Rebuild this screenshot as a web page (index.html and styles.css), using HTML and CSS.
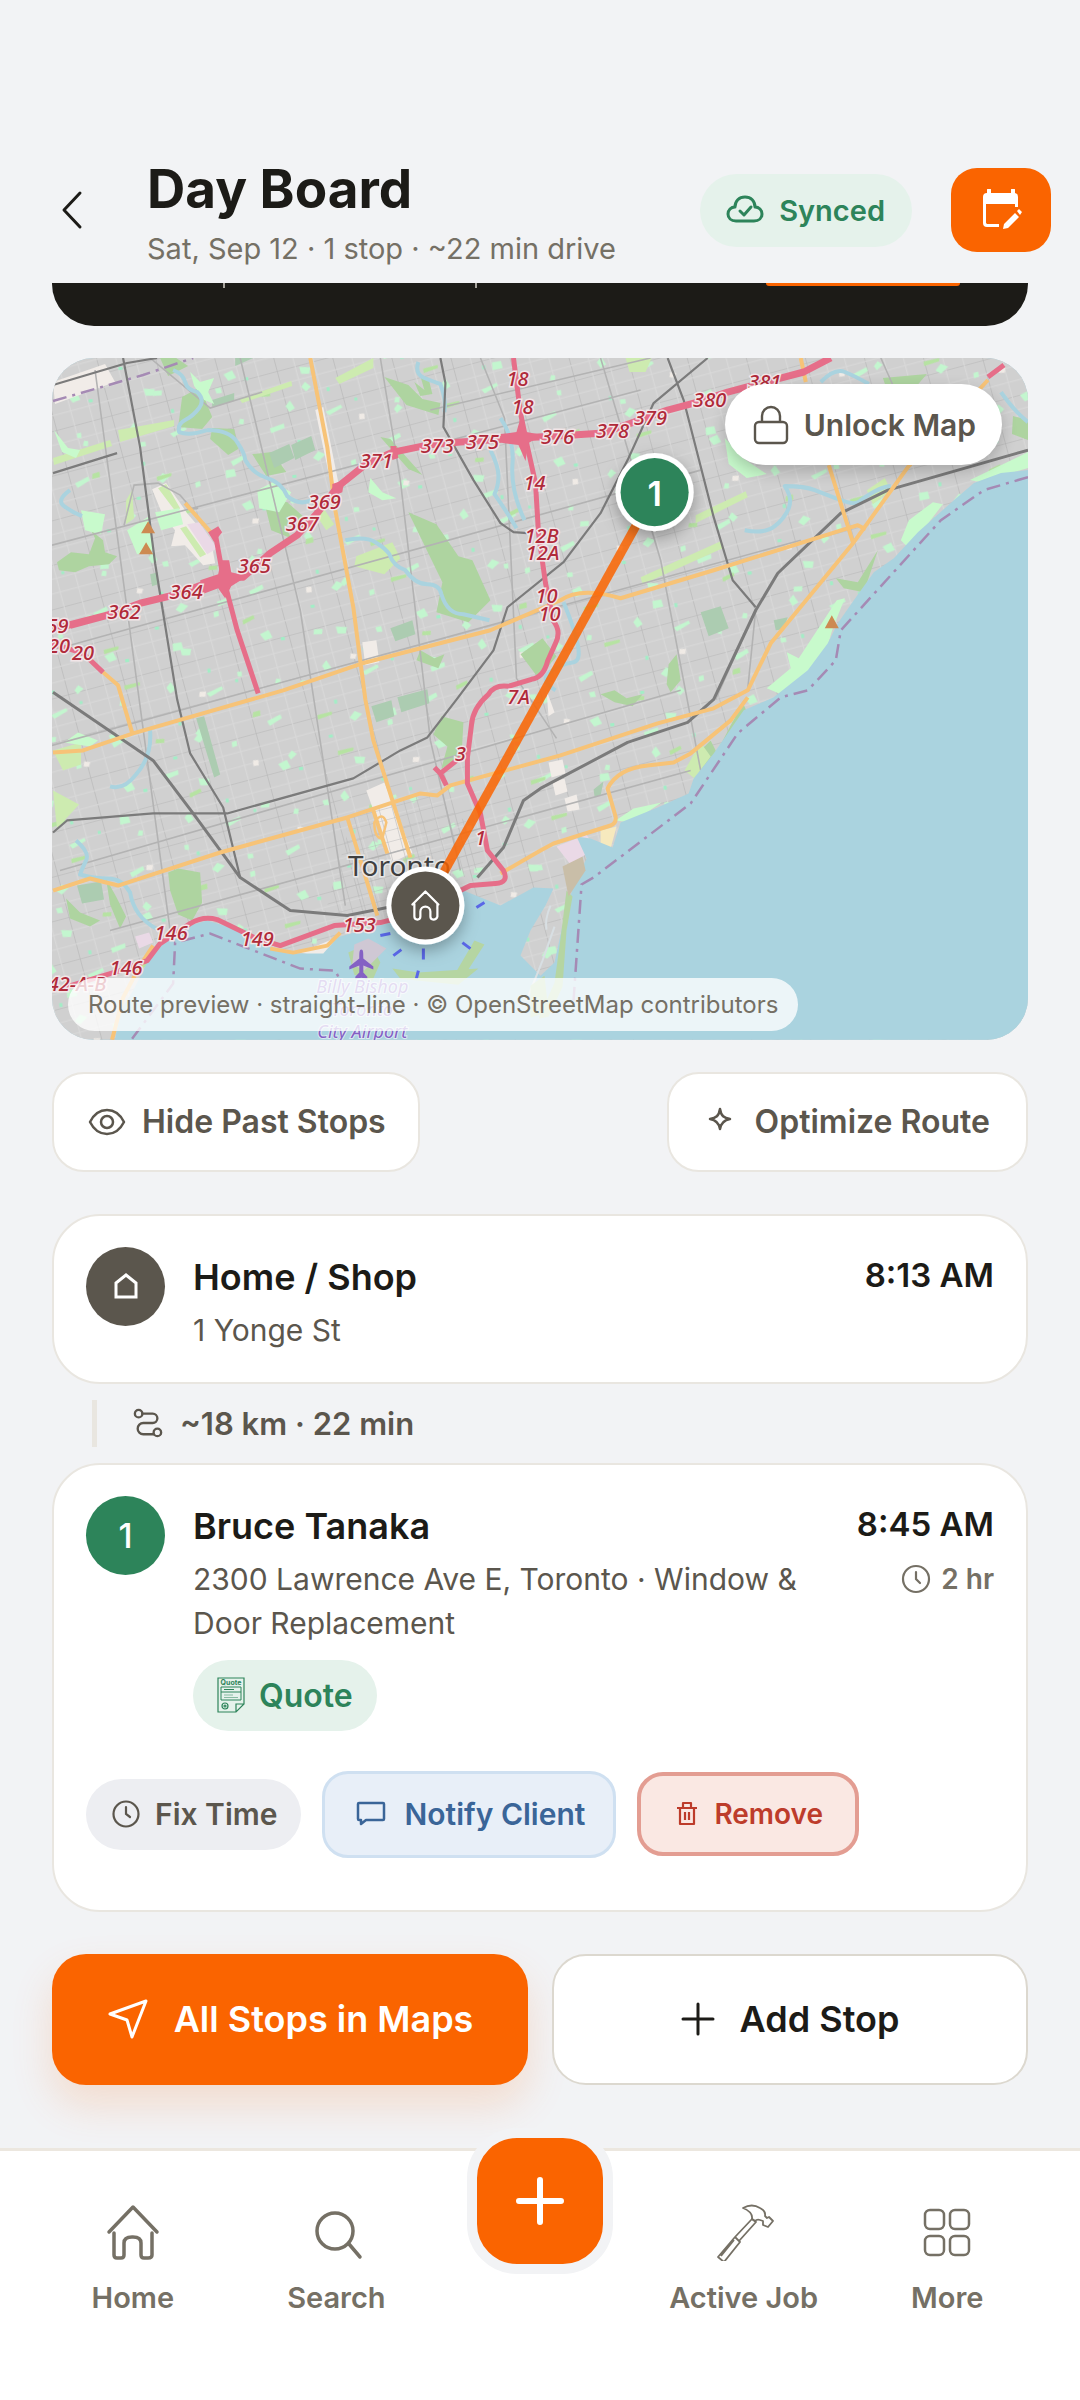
FILE: index.html
```html
<!DOCTYPE html>
<html lang="en">
<head>
<meta charset="utf-8">
<meta name="viewport" content="width=device-width, initial-scale=1">
<title>Day Board</title>
<link rel="stylesheet" href="styles.css">
</head>
<body>
<div class="app">
  <header class="header">
    <button class="back" type="button" aria-label="Back">
      <svg width="24" height="40" viewBox="0 0 24 40" fill="none" stroke="currentColor" stroke-width="3" stroke-linecap="round" stroke-linejoin="round"><path d="M20 3 4 20l16 17"/></svg>
    </button>
    <div class="heading">
      <h1 class="title">Day Board</h1>
      <p class="subtitle">Sat, Sep 12 · 1 stop · ~22 min drive</p>
    </div>
    <div class="synced">
      <svg width="38" height="30" viewBox="0 0 38 30" fill="none" stroke="currentColor" stroke-width="3" stroke-linecap="round" stroke-linejoin="round"><path d="M10 26c-5 0-8-3-8-7s3-7 7-7c0-6 4-10 10-10s10 4 10 10c4 0 7 3 7 7s-3 7-8 7z"/><path d="m14 16 4 4 7-8"/></svg>
      <span>Synced</span>
    </div>
    <button class="edit-day" type="button" aria-label="Edit day">
      <svg width="42" height="42" viewBox="0 0 42 42" fill="none"><path d="M9 1v5M33 1v5" stroke="#fff" stroke-width="4" stroke-linecap="round"/><path d="M19 38H7a4 4 0 0 1-4-4V8a4 4 0 0 1 4-4h27a4 4 0 0 1 4 4v10h-3v-3H6v19l1 1h12z" fill="#fff"/><path d="m24 35 11-11 4 4-11 11-5 1zM37 22l2-2 3 3-2 3z" fill="#fff"/></svg>
    </button>
  </header>

  <main class="main">
    <section class="summary" aria-label="Day summary"><span class="rule"></span><span class="rule"></span><span class="summary-action"></span></section>

    <section class="map" aria-label="Route map">
      <svg class="map-art" viewBox="52 358 975 681" preserveAspectRatio="xMidYMid slice">
        <defs>
          <pattern id="streets" width="57" height="43" patternUnits="userSpaceOnUse" patternTransform="rotate(-15)"><path d="M0 0H57M0 0V43" stroke="#b6b6b6" stroke-width="1.2" fill="none"/><path d="M0 14H57M0 28H57M19 0V43M38 0V43" stroke="#d9d9d9" stroke-width="1" fill="none"/></pattern>
          <pattern id="downtown" width="13" height="11" patternUnits="userSpaceOnUse" patternTransform="rotate(-15)"><path d="M0 0H13M0 0V11" stroke="#b9b9b9" stroke-width="1.1" fill="none"/></pattern>
          <pattern id="parks" width="157" height="131" patternUnits="userSpaceOnUse" patternTransform="rotate(-8)"><path fill="#c3f6cf" d="m12 9 9-3 3 8-8 2zM88 12l11 2-2 6-8-1zM22 55l4 1-1 5-5-1zM69 49l5-5 4 8-6 3zM108 60l16-5 1 3-14 6zM7 96l14-5 1 4-13 6zM89 104l6-6 7 4-8 6zM126 112l5-1v5l-5 1z"/><path fill="#a2eec6" d="M32 15h4v3h-4zM112 36h3v4h-3zM138 50h3v3h-3zM76 84h3v4h-3zM66 118h4v3h-4z"/></pattern>
          <pattern id="gardens" width="223" height="181" patternUnits="userSpaceOnUse" patternTransform="rotate(17)"><path fill="#c3f6cf" d="m40 20 5-2 2 4-5 2zM130 22l8-4 4 6-9 5zM52 89l6 2-4 7-4-3zM38 148l8-3 1 5-8 3zM180 95l7 3-3 6-6-3zM160 150l12-9 2 4-11 9zM96 128l5-3 3 5-5 2zM200 30l4-2 2 5-4 1z"/><path fill="#b6e3a2" d="m66 48 13-8 1 3-12 9zM4 64l6-4 2 5-7 4zM96 76l14-8 1 3-13 9zM142 118l8-3 1 4-8 3zM190 160l9-8 2 3-9 9z"/><path fill="#f0ebe6" d="m18 110 5-2 2 5-5 2zM170 60l6-2 1 5-6 2zM80 160l6-1v5l-5 1z"/></pattern>
          <filter id="pinShadow" x="-50%" y="-50%" width="200%" height="200%"><feDropShadow dx="0" dy="6" stdDeviation="8" flood-color="#000" flood-opacity=".3"/></filter>
          <path id="lake" d="M1027 470 1000 473 973 483 953 500 917 532 893 558 873 572 853 600 837 623 827 643 807 670 773 697 743 710 713 753 693 778 688 793 657 807 620 822 612 847 590 838 576 836 586 858 572 888 562 925 554 962 540 975 520 955 530 930 545 905 553 888 533 887 500 905 463 890 430 905 387 923 360 930 337 937 323 953 287 953 270 947 240 930 207 920 183 927 157 943 143 970 133 990 120 1010 115 1039H1027z"/>
        </defs>
        <path fill="#d0d0d0" d="M52 358h975v681H52z"/>
        <path fill="url(#streets)" d="M52 358h975v681H52z"/>
        <path fill="url(#parks)" d="M52 358h975v681H52z"/>
        <path fill="url(#gardens)" d="M52 358h975v681H52z"/>
        <g fill="#f1ece8">
          <path d="m152 489 14-6 21 30 24 28 4 22-12 2-18-20-14 1 4-16-12-14zM362 642l14-2 3 22-14 3zM366 790l18-8 28 70-20 10zM548 762l14-3 3 14-14 4zM552 782l12-4 3 13-12 4zM564 798l12-4 3 15-12 2zM53 382l52-18 10 18-60 22zM300 952l34-14 20 6-18 16zM546 690l8 22-6 4z"/><path d="m315 410 8-3 17 85-7 3z"/>
        </g>
        <path fill="#ead9e6" d="m187 524 12-2 18 26-10 6zM556 846l30-12 8 14-24 16zM135 936l14-4 4 10-14 6z"/>
        <g fill="#aed4a0">
          <path d="m182 397 18-10 12 30-10 12-24-2zM212 428l22 1 4 20-10 6-18-16zM384 377l24 8 14 14 18 4-2 12-32-10zM252 454l20-2 14 20-20 4zM263 498l24 4 18 16-20 8 6 12-20-8zM380 437l10 2 32 36-14-6zM408 512l28 12 22 32 14 4 18 40-22 22-32-10 6-30zM463 722l-22-6-8 18 14 12-6 22 20-10zM835 578l22 4 20-32-14 42-20-4zM160 358l8 18 20-10-12-8zM520 654l22-16 14 18-18 22zM882 378l44-4-12 14-28 2zM1012 416l15 4v20l-16-6z"/>
          <path d="m57 562 14-10 18 2 6-16-4-8 12 10 2 12 12 4-8 8-20 2-14 6-16-2zM168 872l10-4 22 4 2 30-10 18-14-6-8-24zM106 878l10 18 10 20-6 12-10-24zM66 898l14 14 20 8-10 6-20-8zM414 382l10 8-4-14 8 2 4 16-12 2zM420 650l14 8 10-4-6 14-22-8z"/>
          <path d="m690 760 20-20 6 12-16 22zM742 702 718 748l6 2 24-34zM600 694l14-4 12 8 16-4-10 12-18-4zM668 664l8-10 4 26-10 12-4-8z"/>
        </g>
        <g fill="#acccb1"><path d="m269 453 20-9 5 14-20 10zM291 445l20-9 4 14-20 10zM371 706l20-6 3 16-18 6zM397 697l30-8 2 14-28 9zM196 718l8-2 16 58-6 3zM77 885l24-4 3 18-22 4zM700 612l20-6 8 22-20 8zM390 628l22-8 3 14-20 7zM212 400l22-7v8l-22 6zM150 574l8-2v12l-6 2zM773 620l14-3-4 12-8 1zM593 789l10-8-3 14-6 1zM235 358h18l-18 8z"/></g>
        <g fill="#cdebb0"><path d="M53 458 110 440l2 6-58 19zM118 430l56-10v6l-54 16zM239 399l52-18 1 5-50 17zM335 378l38-20v10l-34 16zM53 750l28-8v22l-18 6zM53 790l26 14-22 24zM356 556l36-14 8 16-16 16-30-8zM640 577l80-36 2 7-80 36zM695 515l50-24 2 6-52 26zM625 358h26l-6 14h-16zM866 490l18-12 6 12-18 14zM158 488l8-4 14 24-4 4zM180 528l6-2 20 28-6 3zM126 500l6-10 2 28-8 6zM700 742l10 14-16 22-10-8zM322 506l12 18-8 6-8-12z"/></g>
        <g fill="#c8facc"><path d="m257 490 16-8 18 10-12 20-20-4zM155 512l24-4 4 16-22 6zM81 510l24 4-4 20-16-4zM724 438l18 20 24 16-20 4-18-14zM908 520l24-18 10 2-34 44-8-8zM1027 452l-58 28 10 2 48-14zM836 600l8-2-12 30-12 40-20 12-20 14-14-6 24-20-4-16 12 6zM615 820l18-12 28-6-30 20zM127 530l22-14 4 34-16 4zM190 372l10 10 14-4-6 14 6 12-10-4-10-14zM54 430l14 18 12 2-4 8-14-6zM64 742l14-10 20 8-8 6zM370 478l12 14 14 6-14 2-14-8z"/></g>
        <path fill="#f6e9be" d="m600 830 16-4-6 22-10-4z"/>
        <path fill="url(#downtown)" d="m352 816 76-24 44 34 12 40-84 44-76 5z"/>
        <g fill="none" stroke="#b3b3b3" stroke-width="1.6">
          <path d="M95 370 170 930M240 358 300 610 345 905M380 358 400 480 430 740 460 870M600 358 660 560 700 770M880 358 925 460M52 545 640 390M52 650 700 470M52 745 800 540M60 870 680 690M110 930 690 770M430 410 650 358M150 358l60 50 52-16M480 358l24 60 12 260 40 60M715 699l40-90-8 80M124 525l10-40 24-2 22 12 12 14 6-1"/>
        </g>
        <use href="#lake" fill="#aad3df"/>
        <g fill="none" stroke="#aad3df" stroke-width="4" stroke-linejoin="round">
          <path d="M173 370q10 4 12 12t12 10q8 8 2 16t-14 12-6 12q10 4 28-2M207 430q22 0 30 12t8 18q8 14 22 18t20 18q12 10 24 4M70 490q-14 10-6 16t18 10M345 540q20-4 30 2t14 12q4 12 16 16 10 14 22 14t14 10q6 20 22 20l26 6M418 362q-4 12 6 16t16 6q6 16 4 28M490 450q8 16 8 26t-4 18q14 20 22 34M76 840q14 12 10 20t-6 14q14 4 28 4t22 14q4 24 26 36M150 730q2 26-14 44-12 16-26 12M555 690q-16-10-6-18t24-10-10-60M744 530q20 4 30-4t14-18-4-22q20 0 30 4t26 10 20 0q20-14 30-14M820 382q14-14 24-10t24 12M1000 392q14 20 27 30M500 418q14 20 12 46t12 56"/>
        </g>
        <g fill="none" stroke="#7b7b7b" stroke-width="2.2" stroke-linejoin="round">
          <path d="m123 358 17 89 15 116 22 136 13 54 33 54 17 70M53 385l74-22 30-5M53 473l64-20M440 358l5 25-2 44 30 53 27 43 13 9 14 1M707 358l-54 45-26 57-27 53-37 49-56 45-14 43-36 48-30 39-27 13-47 28-126 35H153l-86 7-14 12M667 358l16 42 30 117 19 63 23 27"/>
          <path stroke-width="3" d="m53 692 100 68 40 53 47 64 50 33 57 5 40-8M1027 450 887 490l-47 23-63 60-22 37-42 89-26 23-60 20-87 46-17 12-20 47-26 30"/>
        </g>
        <g fill="none" stroke="#f7c377" stroke-width="4" stroke-linejoin="round">
          <path d="m310 358 17 89 8 63 18 97 12 92 8 41 20 63 17 54M53 890l37-12 28 7 102-33 127-35 73-24 17 2 13-10 110-30 97-32 56-15 34-18 23-47 83-101 54-75 80-87M53 752l30-2 50-17 150-43 79-27 128-33 70-30q20-14 60-2l93-28 144-45 8 4M828 465l24 77M800 358l5 24M500 873l40-23 13-7 57-18q6-2 5-9l-8-28q10-20 40-23l26-3 17-9 40-33 17-23M103 672l15 13 14 47M185 503l28 32M347 817l8 26 22 72M373 810l14 43M270 948l23 4 34-7 13-13M153 945l-13 20-17 32-11 42"/>
          <path stroke-width="2.500" d="M374 822q8-12 12 0l-4 16q-8 0-8-16z"/>
        </g>
        <path fill="none" stroke="#d8dfe3" stroke-width="2" d="M550 905q-6 14-4 24M526 1000l16-40 12-34"/>
        <g fill="none" stroke="#e66e89" stroke-width="5" stroke-linejoin="round">
          <path stroke-width="7" d="m70 625 37-10M140 603l33-8M207 583l16-6h20l27-24 27-18 20-22 20-26 30-24 26-11 34-7 33-3 60-4 53-3 30-2 64-23 30-8 30-10 76-20 27-14M52 629l55-14 33-12 33-8 50-18"/>
          <path d="m513 358 7 55 7 34 8 36 3 50 7 50 8 38q8 10 2 22l-8 18q-4 16-16 18l-23 7q-14-2-20 8-16 14-17 31l-4 32v26l13 30 7 37 16 20q6 12-8 13l-25 2-56 28-34 9-46 3-54 20-26-8-37-18q-14-4-27 4l-30 20-13 17-27 10-56 17M215 533l8 44 14 53 21 63M987 377l16-12M103 672l-20-19-31-10M460 757l-20 16-6-6M440 773l6 12"/>
          <path fill="#e66e89" stroke="none" d="m200 580 18-6 3-14h8l2 12 16 4-16 10-6 12-7-10-16 6zM500 434l16-2 4-14 6 14 16 3-14 8-3 18-7-16-16-2zM208 532l10-6 4 6-8 10zM332 484l12-4-2 12-10 4zM390 446l6 0 2 12-6 2z"/>
        </g>
        <g fill="none" stroke="#a58ab4" stroke-width="2.500" stroke-dasharray="14 6 3 6">
          <path d="m53 401 90-26 50-17M1027 477l-44 13-43 30-100 110-5 30-28 30-27 7-43 36-47 70-97 74-12 7-8 116M132 1038l41-55 2-41 35-9 90 35 35 2 5 10"/>
        </g>
        <g fill="#b5d5a2"><path d="m348 952 22-10 10 20-8 18-18-6zM392 968l26 4 60-4-20 16-58-6zM474 940l10 4-22 34-8-4zM566 890l6 6-6 34-4 56-14 30-10 2 16-36 6-44zM530 985l14-10 4 36-18 6z"/><path fill="#c9bea8" d="m562 866 20-10 3 14-17 26z"/></g>
        <path fill="#cfc8d4" d="m354 944 14-6 18 10-22 22-12-6z"/>
        <g fill="#cd8a52"><path d="m148 521 7 12h-14zM146 542l7 12h-14zM831 615l7 13h-14z"/></g>
        <path fill="#8461c4" d="M361 949c2 0 2 3 2 9l10 8v3l-10-4v7l4 4v2l-6-1-6 1v-2l4-4v-7l-10 4v-3l10-8c0-6 0-9 2-9z"/>
        <path stroke="#5a67e8" stroke-width="3" d="m476 907 8-5M380 935l10-2M393 955l8-6M423 948v11M462 942l8 6M418 970l-2 8"/>
        <g class="exit">
          <text x="517" y="386">18</text><text x="522" y="414">18</text><text x="437" y="453">373</text><text x="482" y="449">375</text><text x="376" y="468">371</text><text x="324" y="509">369</text><text x="302" y="531">367</text><text x="254" y="573">365</text><text x="186" y="599">364</text><text x="124" y="619">362</text><text x="52" y="633">359</text><text x="59" y="653">20</text><text x="83" y="660">20</text><text x="534" y="490">14</text><text x="541" y="543">12B</text><text x="542" y="560">12A</text><text x="546" y="603">10</text><text x="549" y="621">10</text><text x="518" y="704">7A</text><text x="557" y="444">376</text><text x="612" y="438">378</text><text x="650" y="425">379</text><text x="709" y="407">380</text><text x="764" y="389">381</text><text x="460" y="761">3</text><text x="480" y="845">1</text><text x="359" y="931">153</text><text x="257" y="945">149</text><text x="171" y="939">146</text><text x="126" y="974">146</text><text x="77" y="990">42-A-B</text>
        </g>
        <text class="city" x="399" y="875">Toronto</text>
        <g class="airport"><text x="362" y="992">Billy Bishop</text><text x="362" y="1015">Toronto</text><text x="362" y="1037">City Airport</text></g>
        <path d="M654 492 425 905" stroke="#fa6400" stroke-opacity=".85" stroke-width="9"/>
        <g filter="url(#pinShadow)"><circle cx="654" cy="492" r="39" fill="#fff"/><circle cx="425" cy="905" r="39" fill="#fff"/></g>
        <circle cx="654" cy="492" r="34" fill="#2d845a"/><circle cx="425" cy="905" r="34" fill="#5b564d"/>
        <text class="pin-number" x="654" y="506">1</text>
        <path d="m412 904 13-13 13 13M414 903v13q0 3 3 3t3-3v-5a5 5 0 0 1 10 0v5q0 3 3 3t4-3v-13" fill="none" stroke="#fff" stroke-width="2.2" stroke-linecap="round" stroke-linejoin="round"/>
      </svg>
      <button class="unlock" type="button">
        <svg width="36" height="40" viewBox="0 0 36 40" fill="none" stroke="currentColor" stroke-width="2.4"><rect x="2" y="17" width="32" height="21" rx="4"/><path d="M9 17v-6a9 9 0 0 1 18 0v6"/></svg>
        <span>Unlock Map</span>
      </button>
      <p class="attribution">Route preview · straight-line · © OpenStreetMap contributors</p>
    </section>

    <div class="tools">
      <button class="tool" type="button">
        <svg width="38" height="28" viewBox="0 0 38 28" fill="none" stroke="currentColor" stroke-width="2.5" stroke-linejoin="round"><path d="M2 14C6 6 12 2 19 2s13 4 17 12c-4 8-10 12-17 12S6 22 2 14z"/><circle cx="19" cy="14" r="6"/></svg>
        <span>Hide Past Stops</span>
      </button>
      <button class="tool tool-optimize" type="button">
        <svg width="26" height="30" viewBox="0 0 26 30" fill="none" stroke="currentColor" stroke-width="2.5" stroke-linejoin="round"><path d="M13 2c1 7 4 9 10 10-6 1-9 4-10 10-1-6-4-9-10-10 6-1 9-3 10-10z"/></svg>
        <span>Optimize Route</span>
      </button>
    </div>

    <article class="card card-home">
      <div class="badge badge-home">
        <svg width="26" height="28" viewBox="0 0 26 28" fill="none" stroke="currentColor" stroke-width="3"><path d="M3 11 13 3l10 8v14H3z"/></svg>
      </div>
      <div class="card-body">
        <h2 class="name">Home / Shop</h2>
        <p class="address">1 Yonge St</p>
      </div>
      <time class="time">8:13 AM</time>
    </article>

    <div class="leg">
      <span class="leg-line"></span>
      <svg width="30" height="30" viewBox="0 0 32 32" fill="none" stroke="currentColor" stroke-width="2.5" stroke-linecap="round"><circle cx="6" cy="6" r="4"/><circle cx="26" cy="26" r="4"/><path d="M10 6h11a5 5 0 0 1 0 10H11a6 6 0 0 0 0 12h11"/></svg>
      <span>~18 km · 22 min</span>
    </div>

    <article class="card card-stop">
      <div class="badge badge-stop">1</div>
      <div class="card-body">
        <h2 class="name">Bruce Tanaka</h2>
        <p class="address">2300 Lawrence Ave E, Toronto · Window &amp; Door Replacement</p>
        <span class="quote">
          <svg width="28" height="36" viewBox="0 0 28 36" fill="none" stroke="currentColor" stroke-width="1.2"><path d="M1 1h26v26l-8 8H1zM27 27h-8v8"/><path d="M4 10h20v13H4zM4 15h20M7 12.500h10" stroke-width="1"/><path d="M7 18h9M7 20.500h14" stroke-opacity=".5"/><circle cx="8" cy="29" r="3"/><circle cx="8" cy="29" r="1"/><text x="14" y="8" class="quote-mark">Quote</text></svg>
          <span>Quote</span>
        </span>
      </div>
      <div class="when">
        <time class="time">8:45 AM</time>
        <span class="duration">
          <svg width="30" height="30" viewBox="0 0 30 30" fill="none" stroke="currentColor" stroke-width="2.2" stroke-linecap="round"><circle cx="15" cy="15" r="13"/><path d="M15 8v7l4 4"/></svg>
          <span>2 hr</span>
        </span>
      </div>
      <div class="actions">
        <button class="fix" type="button">
          <svg width="28" height="28" viewBox="0 0 28 28" fill="none" stroke="currentColor" stroke-width="2.2" stroke-linecap="round"><circle cx="14" cy="14" r="12.500"/><path d="M14 7v7l4 3"/></svg>
          <span>Fix Time</span>
        </button>
        <button class="notify" type="button">
          <svg width="30" height="26" viewBox="0 0 30 26" fill="none" stroke="currentColor" stroke-width="2.500" stroke-linejoin="round"><path d="M3 2h24q1 0 1 1v15q0 1-1 1H10l-5 4v-4H3q-1 0-1-1V3q0-1 1-1z"/></svg>
          <span>Notify Client</span>
        </button>
        <button class="remove" type="button">
          <svg width="24" height="26" viewBox="0 0 24 26" fill="none" stroke="currentColor" stroke-width="2.2" stroke-linejoin="round"><path d="M2 7h20M8 7V2h8v5M5 7v16h14V7M10 11v8M14 11v8"/></svg>
          <span>Remove</span>
        </button>
      </div>
    </article>

    <div class="cta">
      <button class="cta-button cta-primary" type="button">
        <svg width="42" height="42" viewBox="0 0 42 42" fill="none" stroke="currentColor" stroke-width="3" stroke-linejoin="round"><path d="m39 3-14 36-5-17L3 16z"/></svg>
        <span>All Stops in Maps</span>
      </button>
      <button class="cta-button cta-secondary" type="button">
        <svg width="34" height="34" viewBox="0 0 34 34" fill="none" stroke="currentColor" stroke-width="3" stroke-linecap="round"><path d="M17 2v30M2 17h30"/></svg>
        <span>Add Stop</span>
      </button>
    </div>
  </main>

  <nav class="nav" aria-label="Main">
    <a class="nav-item" href="#home">
      <svg width="56" height="60" viewBox="0 0 56 60" fill="none" stroke="currentColor" stroke-width="3.500" stroke-linecap="round" stroke-linejoin="round"><path d="M4 31 28 6l24 25M9 32v22q0 3 3 3h4q3 0 3-3V42q0-6 8-6h1q8 0 8 6v12q0 3 3 3h4q4 0 4-3V32"/></svg>
      <span>Home</span>
    </a>
    <a class="nav-item" href="#search">
      <svg width="56" height="60" viewBox="0 0 56 60" fill="none" stroke="currentColor" stroke-width="3.500" stroke-linecap="round"><circle cx="27" cy="30" r="18"/><path d="m41 43 11 13"/></svg>
      <span>Search</span>
    </a>
    <button class="fab" type="button" aria-label="New">
      <svg width="50" height="50" viewBox="0 0 50 50" stroke="#fff" stroke-width="6" stroke-linecap="round"><path d="M25 4v42M4 25h42"/></svg>
    </button>
    <a class="nav-item" href="#job">
      <svg width="60" height="60" viewBox="0 0 60 60" fill="none" stroke="currentColor" stroke-width="1.800" stroke-linejoin="round"><path d="M29 7q9-5 17 0 6 3 5 8l2 2 2-1 4 4-5 6-5-2v-4l-3-1q-3-1-5 1l-3-2q1-7-9-11z"/><path d="m38 18 4 3-17 19-4-4zM21 36l5 5-16 20-6-5zM7 55l13-16"/></svg>
      <span>Active Job</span>
    </a>
    <a class="nav-item" href="#more">
      <svg width="56" height="60" viewBox="0 0 56 60" fill="none" stroke="currentColor" stroke-width="2.500"><rect x="6" y="9" width="19" height="19" rx="5"/><rect x="31" y="9" width="19" height="19" rx="5"/><rect x="6" y="35" width="19" height="19" rx="5"/><rect x="31" y="35" width="19" height="19" rx="5"/></svg>
      <span>More</span>
    </a>
  </nav>
</div>
</body>
</html>
```
FILE: styles.css
```css
* { box-sizing: border-box; }

body {
  margin: 0;
  background: #f2f3f5;
  color: #1c1b17;
  font-family: Inter, "Liberation Sans", sans-serif;
}

h1, h2, p { margin: 0; }

svg { display: block; flex: none; }

button {
  display: flex;
  align-items: center;
  justify-content: center;
  margin: 0;
  padding: 0;
  border: 0;
  background: none;
  color: inherit;
  font-family: inherit;
}

.app {
  display: flex;
  flex-direction: column;
  min-height: 100vh;
}

/* Header */
.header {
  display: flex;
  align-items: center;
  padding: 153px 29px 16px 60px;
}

.back { width: 24px; }

.heading {
  flex: 1;
  margin-left: 63px;
}

.title {
  font-size: 53px;
  font-weight: 700;
  line-height: 72px;
}

.subtitle {
  margin-top: 6px;
  color: #757065;
  font-size: 29px;
  line-height: 36px;
}

.synced {
  display: flex;
  align-items: center;
  gap: 15px;
  height: 73px;
  padding: 0 27px 0 26px;
  border-radius: 37px;
  background: #e5f2eb;
  color: #2d845a;
  font-size: 29px;
  font-weight: 600;
}

.edit-day {
  width: 100px;
  height: 84px;
  margin-left: 39px;
  border-radius: 26px;
  background: #fa6400;
}

/* Scrolled content */
.main {
  flex: 1;
  padding: 0 52px 63px;
}

.summary {
  display: flex;
  align-items: flex-start;
  height: 43px;
  padding: 0 68px 0 171px;
  border-radius: 0 0 42px 42px;
  background: #1c1b17;
}

.rule {
  width: 2px;
  height: 5px;
  margin-right: 250px;
  background: #a8a59e;
}

.summary-action {
  flex: none;
  width: 194px;
  height: 3px;
  margin-left: auto;
  border-radius: 0 0 12px 12px;
  background: #fa6400;
}

.map {
  position: relative;
  margin-top: 32px;
  overflow: hidden;
  border-radius: 42px;
  background: #aad3df;
}

.map-art {
  width: 100%;
  height: auto;
  aspect-ratio: 975 / 681;
}

.exit {
  fill: #b02a3a;
  stroke: #f2e6e8;
  stroke-width: 3px;
  paint-order: stroke;
  font: italic 500 20px "Noto Sans", sans-serif;
  text-anchor: middle;
}

.city {
  fill: #404040;
  stroke: #e8e8e8;
  stroke-width: 3px;
  paint-order: stroke;
  font: 28px "Noto Sans", sans-serif;
  text-anchor: middle;
}

.airport {
  fill: #8461c4;
  stroke: #dce9f2;
  stroke-width: 2px;
  paint-order: stroke;
  font: italic 18px "Noto Sans", sans-serif;
  text-anchor: middle;
}

.pin-number {
  fill: #fff;
  font-size: 34px;
  font-weight: 600;
  text-anchor: middle;
}

.unlock {
  position: absolute;
  top: 26px;
  right: 26px;
  gap: 15px;
  height: 81px;
  padding: 0 26px 0 28px;
  border-radius: 41px;
  background: #fff;
  box-shadow: 0 6px 16px rgba(0, 0, 0, .2);
  color: #5b564d;
  font-size: 30px;
  font-weight: 600;
}

.attribution {
  position: absolute;
  bottom: 9px;
  left: 16px;
  padding: 0 20px;
  border-radius: 27px;
  background: rgba(255, 255, 255, .78);
  color: #757065;
  font-size: 24px;
  line-height: 53px;
}

.tools {
  display: flex;
  justify-content: space-between;
  margin-top: 32px;
}

.tool {
  gap: 16px;
  height: 100px;
  padding: 0 32px 0 34px;
  border: 2px solid #e9e6e0;
  border-radius: 32px;
  background: #fff;
  color: #5b564d;
  font-size: 32px;
  font-weight: 600;
}

.tool-optimize {
  gap: 22px;
  padding: 0 36px 0 38px;
}

/* Stops */
.card {
  display: grid;
  grid-template-columns: 79px 1fr auto;
  column-gap: 28px;
  padding: 31px 32px 0;
  border: 2px solid #e9e6e0;
  border-radius: 48px;
  background: #fff;
}

.card-home {
  margin-top: 42px;
  padding-bottom: 30px;
}

.card-stop { padding-bottom: 52px; }

.badge {
  display: flex;
  align-items: center;
  justify-content: center;
  width: 79px;
  height: 79px;
  border-radius: 50%;
  color: #fff;
  font-size: 34px;
  font-weight: 500;
}

.badge-home { background: #5b564d; }

.badge-stop { background: #2d845a; }

.name {
  font-size: 36px;
  font-weight: 600;
  line-height: 61px;
}

.address {
  color: #5b564d;
  font-size: 30px;
  line-height: 44px;
}

.time {
  display: block;
  font-size: 33px;
  font-weight: 600;
  line-height: 56px;
  text-align: right;
}

.duration {
  display: flex;
  align-items: center;
  justify-content: flex-end;
  gap: 10px;
  color: #757065;
  font-size: 28px;
  font-weight: 600;
  line-height: 54px;
}

.leg {
  display: flex;
  align-items: center;
  height: 79px;
  padding-left: 40px;
  color: #5b564d;
  font-size: 31px;
  font-weight: 600;
}

.leg-line {
  width: 5px;
  height: 47px;
  background: #e9e6e0;
}

.leg svg { margin: 0 17px 0 36px; }

.quote {
  display: inline-flex;
  align-items: center;
  gap: 14px;
  height: 71px;
  margin-top: 15px;
  padding: 0 24px;
  border-radius: 36px;
  background: #e5f2eb;
  color: #2d845a;
  font-size: 32px;
  font-weight: 600;
  vertical-align: top;
}

.quote-mark {
  fill: currentColor;
  stroke: none;
  font-size: 7px;
  font-weight: 700;
  text-anchor: middle;
}

.actions {
  display: flex;
  grid-column: 1 / -1;
  align-items: center;
  gap: 21px;
  margin-top: 40px;
}

.fix {
  gap: 15px;
  height: 71px;
  padding: 0 23px 0 26px;
  border-radius: 36px;
  background: #edeef2;
  color: #5b564d;
  font-size: 30px;
  font-weight: 600;
}

.notify {
  gap: 19px;
  height: 87px;
  padding: 0 28px 0 31px;
  border: 3px solid #cfe0f1;
  border-radius: 26px;
  background: #e8eff8;
  color: #3a6598;
  font-size: 30px;
  font-weight: 600;
}

.remove {
  gap: 15px;
  height: 84px;
  padding: 0 32px 0 34px;
  border: 4px solid #e39d92;
  border-radius: 26px;
  background: #fae8e3;
  color: #bd3c2b;
  font-size: 28px;
  font-weight: 600;
}

.cta {
  display: grid;
  grid-template-columns: 1fr 1fr;
  gap: 24px;
  margin-top: 42px;
}

.cta-button {
  gap: 25px;
  height: 131px;
  border-radius: 34px;
  font-size: 36px;
  font-weight: 600;
}

.cta-primary {
  background: #fa6400;
  box-shadow: 0 20px 42px rgba(250, 100, 0, .16);
  color: #fff;
}

.cta-secondary {
  border: 2px solid #dcd8cf;
  background: #fff;
}

/* Bottom navigation */
.nav {
  position: relative;
  display: grid;
  grid-template-columns: repeat(5, 1fr);
  justify-items: center;
  align-items: start;
  min-height: 252px;
  padding: 50px 31px 0;
  border-top: 3px solid #ece7df;
  background: #fff;
}

.nav-item {
  display: flex;
  flex-direction: column;
  align-items: center;
  gap: 17px;
  color: #757065;
  font-size: 29px;
  font-weight: 600;
  line-height: 40px;
  text-decoration: none;
  white-space: nowrap;
}

.fab {
  width: 146px;
  height: 146px;
  margin-top: -73px;
  border: 10px solid #f2f3f5;
  border-radius: 50px;
  background: #fa6400;
}
```
